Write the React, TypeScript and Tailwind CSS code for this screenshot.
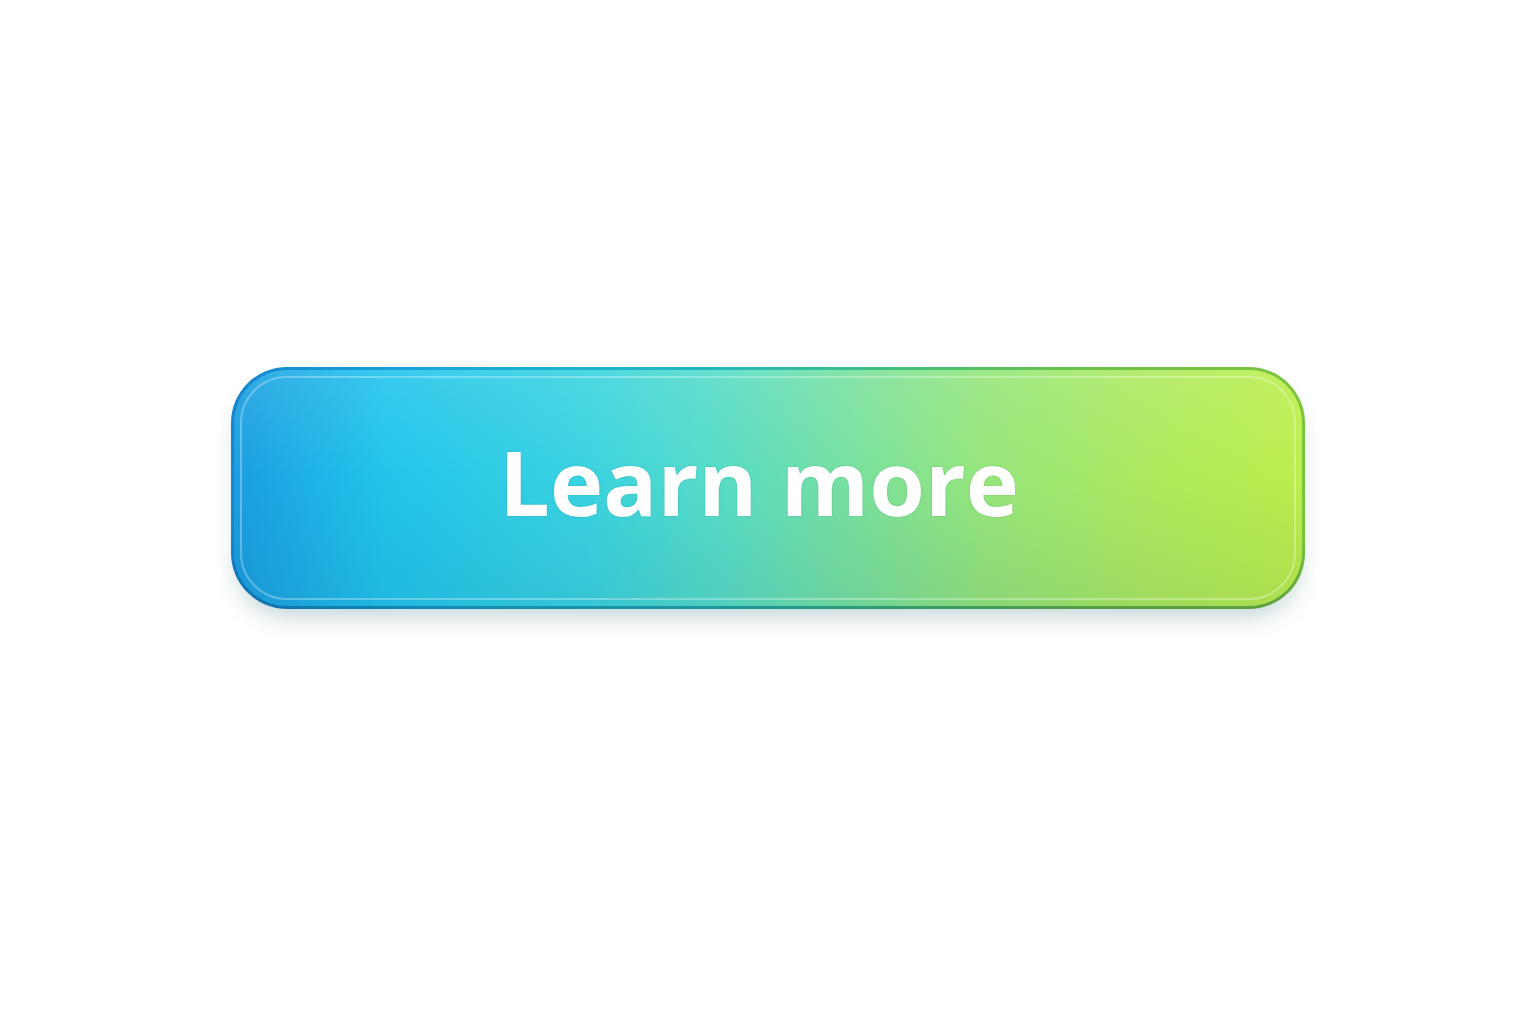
import React from 'react';

// Pill-shaped call-to-action with a blue → lime gradient and a glassy inner ring
const LearnMoreButton: React.FC = () => {
  return (
    <button
      type="button"
      className="w-[1074px] h-[242px] rounded-[56px] p-[3px] bg-[linear-gradient(180deg,rgba(255,255,255,0)_0%,rgba(255,255,255,0)_70%,rgba(0,50,60,0.25)_100%),linear-gradient(90deg,#1584cc_0%,#1aa8dc_20%,#22b8c0_45%,#3fc07e_62%,#6cc248_80%,#7cc43e_100%)] shadow-[0_14px_24px_-8px_rgba(40,100,110,0.3)]"
    >
      <div className="w-full h-full rounded-[53px] p-[6px] bg-[linear-gradient(180deg,rgba(255,255,255,0.10)_0%,rgba(255,255,255,0)_45%,rgba(0,40,80,0.08)_100%),linear-gradient(90deg,#1b9ee0_0%,#22c4ec_14%,#3ad3e0_33%,#56dcc8_45%,#74e0a4_56%,#96e67c_70%,#aeea5e_86%,#bcee4c_100%)]">
        <div className="w-full h-full rounded-[47px] border-2 border-white/30 flex items-center justify-center pb-[14px] pr-[18px]">
          <span className="font-['Open_Sans',sans-serif] font-bold text-[90px] leading-none text-white [text-shadow:0_0_1.5px_rgba(0,90,90,0.35)]">
            Learn more
          </span>
        </div>
      </div>
    </button>
  );
};

export default function App() {
  return (
    <div className="min-h-screen w-full bg-white flex justify-center pt-[367px]">
      <LearnMoreButton />
    </div>
  );
}
